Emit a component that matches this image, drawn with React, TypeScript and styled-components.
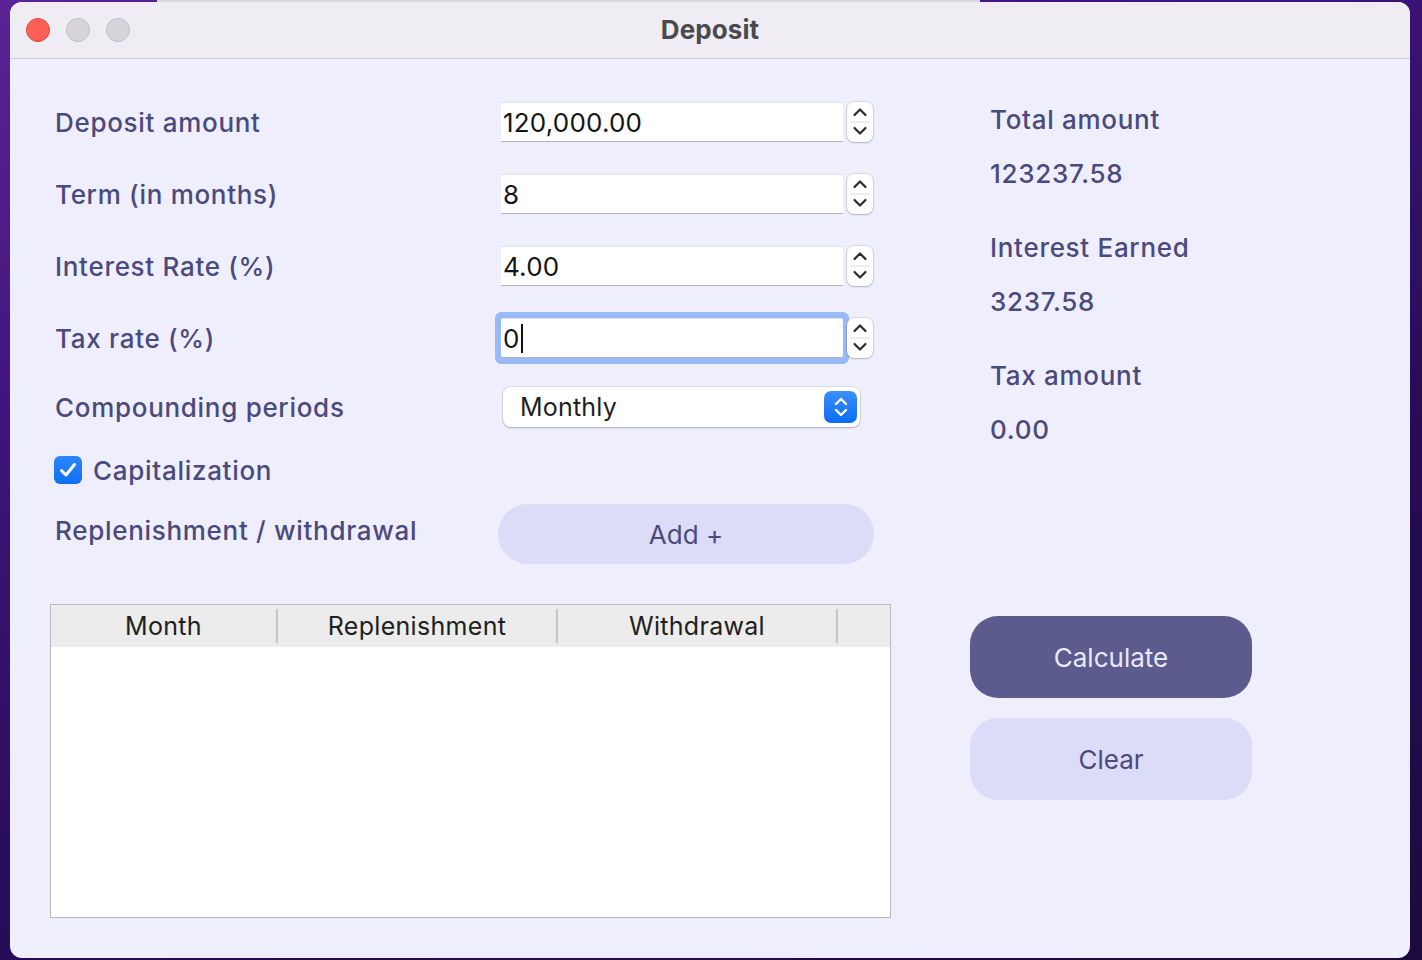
import React from 'react';
import styled, { createGlobalStyle } from 'styled-components';

const GlobalStyle = createGlobalStyle`
  html, body { margin: 0; padding: 0; }
  body {
    width: 1422px;
    height: 960px;
    overflow: hidden;
    font-family: Inter, "Liberation Sans", sans-serif;
    background: #2a0f5a;
  }
  * { box-sizing: border-box; }
`;

const LABEL = '#4b4a7c';

const Desktop = styled.div`
  width: 1422px;
  height: 960px;
  padding: 2px 12px 2px 10px;
  background:
    linear-gradient(#d9d7dd, #d9d7dd) 157px 0 / 823px 2px no-repeat,
    linear-gradient(160deg, #5a2396 0%, #3a1274 35%, #260c55 65%, #1c0a3f 100%);
`;

const Window = styled.div`
  width: 1400px;
  height: 956px;
  border-radius: 12px;
  overflow: hidden;
  background: #efeefd;
  display: flex;
  flex-direction: column;
`;

const TitleBar = styled.div`
  height: 57px;
  flex-shrink: 0;
  background: #efecf3;
  border-bottom: 1px solid #cdcad4;
  display: grid;
  grid-template-columns: 1fr auto 1fr;
  align-items: center;
`;

const Lights = styled.div`
  display: flex;
  gap: 16px;
  padding-left: 16px;
`;

const Light = styled.span<{ $color: string; $border: string }>`
  width: 24px;
  height: 24px;
  border-radius: 50%;
  background: ${(p) => p.$color};
  border: 1px solid ${(p) => p.$border};
`;

const Title = styled.div`
  font-family: Inter, "Liberation Sans", sans-serif;
  font-weight: 700;
  font-size: 26px;
  color: #4a4a4c;
  letter-spacing: 0.1px;
  margin-bottom: 1px;
`;

const Content = styled.div`
  display: flex;
  padding-left: 40px;
  flex: 1;
`;

const LeftPanel = styled.div`
  width: 841px;
  padding-top: 27px;
  display: flex;
  flex-direction: column;
`;

const Row = styled.div<{ $h: number }>`
  display: flex;
  align-items: center;
  height: ${(p) => p.$h}px;
`;

const Label = styled.div<{ $lift?: number }>`
  width: 444px;
  padding-left: 5px;
  font-size: 26px;
  font-weight: 500;
  letter-spacing: 0.7px;
  color: ${LABEL};
  margin-bottom: ${(p) => p.$lift ?? 0}px;
`;

const SpinField = styled.div`
  display: flex;
  align-items: center;
  gap: 4px;
  padding-left: 7px;
`;

const Field = styled.div<{ $focused?: boolean }>`
  width: 342px;
  height: 40px;
  background: #fff;
  border-top: 1px solid #e2e1ea;
  border-bottom: 1px solid #b4b3bb;
  display: flex;
  align-items: center;
  padding-left: 2px;
  font-family: Inter, "Liberation Sans", sans-serif;
  font-size: 26px;
  letter-spacing: 0.2px;
  color: #141414;
  border-radius: ${(p) => (p.$focused ? '2px' : '0')};
  box-shadow: ${(p) => (p.$focused ? '0 0 0 6px #98bbf7' : 'none')};
`;

const Caret = styled.span`
  width: 2px;
  height: 29px;
  background: #111;
  margin-left: 1px;
`;

const StepperBox = styled.div`
  width: 26px;
  height: 40px;
  border-radius: 7px;
  background: #fff;
  box-shadow: 0 0 0 1px rgba(0, 0, 0, 0.08), 0 1px 2px rgba(0, 0, 0, 0.2);
  display: flex;
`;

const Stepper = () => (
  <StepperBox>
    <svg width="26" height="40" viewBox="0 0 26 40">
      <line x1="3" y1="20" x2="23" y2="20" stroke="#dedde3" strokeWidth="1" />
      <path d="M7.5 13 L13 7.5 L18.5 13" fill="none" stroke="#2b2b2b" strokeWidth="2.2" strokeLinecap="round" strokeLinejoin="round" />
      <path d="M7.5 26 L13 31.5 L18.5 26" fill="none" stroke="#2b2b2b" strokeWidth="2.2" strokeLinecap="round" strokeLinejoin="round" />
    </svg>
  </StepperBox>
);

const Select = styled.div`
  margin-left: 9px;
  width: 357px;
  height: 40px;
  border-radius: 8px;
  background: #fff;
  box-shadow: 0 0 0 1px rgba(0, 0, 0, 0.07), 0 1px 2px rgba(0, 0, 0, 0.22);
  display: flex;
  align-items: center;
  justify-content: space-between;
  padding: 0 3px 0 17px;
  font-size: 25px;
  letter-spacing: 0.2px;
  color: #1e1e1e;
`;

const SelectKnob = styled.div`
  width: 33px;
  height: 32px;
  border-radius: 7px;
  background: linear-gradient(#3d90fa, #0a6cf4);
  display: flex;
  align-items: center;
  justify-content: center;
`;

const Check = styled.div`
  width: 28px;
  height: 28px;
  border-radius: 6px;
  margin-left: 4px;
  margin-right: 11px;
  background: linear-gradient(#2a86fa, #0f6ff4);
  display: flex;
  align-items: center;
  justify-content: center;
`;

const CheckText = styled.span`
  font-size: 26px;
  font-weight: 500;
  letter-spacing: 0.7px;
  color: ${LABEL};
`;

const PillButton = styled.button<{ $dark?: boolean; $w: number; $h: number; $r: number }>`
  width: ${(p) => p.$w}px;
  height: ${(p) => p.$h}px;
  border-radius: ${(p) => p.$r}px;
  border: none;
  background: ${(p) => (p.$dark ? '#5c5b8e' : '#dcdbf8')};
  color: ${(p) => (p.$dark ? '#e8e8fc' : LABEL)};
  font-family: Inter, "Liberation Sans", sans-serif;
  font-size: 26px;
  padding: 0;
  cursor: pointer;
`;

const AddWrap = styled.div`
  margin-left: 4px;
  display: flex;
`;

const Table = styled.div`
  margin-top: 36px;
  width: 841px;
  height: 314px;
  border: 1px solid #b9b9bc;
  background: #fff;
`;

const HeaderRow = styled.div`
  display: grid;
  grid-template-columns: 227px 280px 280px 1fr;
  height: 42px;
  background: #ececec;
`;

const HeaderCell = styled.div<{ $divider?: boolean }>`
  display: flex;
  align-items: center;
  justify-content: center;
  padding-right: 2px;
  font-size: 25px;
  letter-spacing: 0.3px;
  color: #202020;
  background: ${(p) =>
    p.$divider ? 'linear-gradient(#c6c6c8, #c6c6c8) right center / 2px 34px no-repeat' : 'none'};
`;

const RightPanel = styled.div`
  margin-left: 79px;
  width: 282px;
  padding-top: 33px;
  display: flex;
  flex-direction: column;
`;

const ResultGroup = styled.div`
  display: flex;
  flex-direction: column;
  margin-bottom: 20px;
`;

const ResultLine = styled.div`
  height: 54px;
  display: flex;
  align-items: center;
  padding-left: 20px;
  font-size: 26px;
  font-weight: 500;
  letter-spacing: 0.7px;
  color: ${LABEL};
`;

const Buttons = styled.div`
  margin-top: 140px;
  display: flex;
  flex-direction: column;
  gap: 20px;
`;

const results = [
  ['Total amount', '123237.58'],
  ['Interest Earned', '3237.58'],
  ['Tax amount', '0.00'],
];

const inputs: { label: string; value: string; focused?: boolean }[] = [
  { label: 'Deposit amount', value: '120,000.00' },
  { label: 'Term (in months)', value: '8' },
  { label: 'Interest Rate (%)', value: '4.00' },
  { label: 'Tax rate (%)', value: '0', focused: true },
];

export default function App() {
  return (
    <>
      <GlobalStyle />
      <Desktop>
        <Window>
          <TitleBar>
            <Lights>
              <Light $color="#fe5f57" $border="#e2463f" />
              <Light $color="#d7d5da" $border="#c2c0c6" />
              <Light $color="#d7d5da" $border="#c2c0c6" />
            </Lights>
            <Title>Deposit</Title>
            <div />
          </TitleBar>
          <Content>
            <LeftPanel>
              {inputs.map((it) => (
                <Row $h={72} key={it.label}>
                  <Label>{it.label}</Label>
                  <SpinField>
                    <Field $focused={it.focused}>
                      {it.value}
                      {it.focused && <Caret />}
                    </Field>
                    <Stepper />
                  </SpinField>
                </Row>
              ))}
              <Row $h={66}>
                <Label>Compounding periods</Label>
                <Select>
                  Monthly
                  <SelectKnob>
                    <svg width="20" height="26" viewBox="0 0 20 26">
                      <path d="M5 10 L10 5 L15 10" fill="none" stroke="#fff" strokeWidth="2.4" strokeLinecap="round" strokeLinejoin="round" />
                      <path d="M5 16 L10 21 L15 16" fill="none" stroke="#fff" strokeWidth="2.4" strokeLinecap="round" strokeLinejoin="round" />
                    </svg>
                  </SelectKnob>
                </Select>
              </Row>
              <Row $h={60}>
                <Check>
                  <svg width="22" height="22" viewBox="0 0 22 22">
                    <path d="M4.5 11.5 L9 16 L17.5 5.5" fill="none" stroke="#fff" strokeWidth="3" strokeLinecap="round" strokeLinejoin="round" />
                  </svg>
                </Check>
                <CheckText>Capitalization</CheckText>
              </Row>
              <Row $h={68}>
                <Label $lift={8}>Replenishment / withdrawal</Label>
                <AddWrap>
                  <PillButton $w={376} $h={60} $r={30}>Add +</PillButton>
                </AddWrap>
              </Row>
              <Table>
                <HeaderRow>
                  <HeaderCell $divider>Month</HeaderCell>
                  <HeaderCell $divider>Replenishment</HeaderCell>
                  <HeaderCell $divider>Withdrawal</HeaderCell>
                  <HeaderCell />
                </HeaderRow>
              </Table>
            </LeftPanel>
            <RightPanel>
              {results.map(([l, v]) => (
                <ResultGroup key={l}>
                  <ResultLine>{l}</ResultLine>
                  <ResultLine>{v}</ResultLine>
                </ResultGroup>
              ))}
              <Buttons>
                <PillButton $dark $w={282} $h={82} $r={28}>Calculate</PillButton>
                <PillButton $w={282} $h={82} $r={28}>Clear</PillButton>
              </Buttons>
            </RightPanel>
          </Content>
        </Window>
      </Desktop>
    </>
  );
}
